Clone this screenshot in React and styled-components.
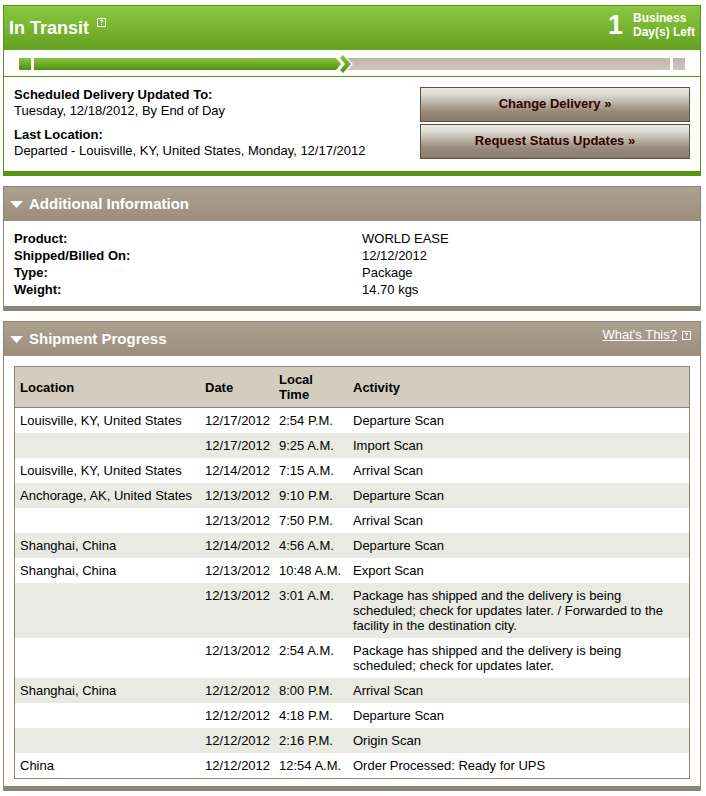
import React from 'react';
import styled, { createGlobalStyle } from 'styled-components';

const details = [
  { label: 'Product:', value: 'WORLD EASE' },
  { label: 'Shipped/Billed On:', value: '12/12/2012' },
  { label: 'Type:', value: 'Package' },
  { label: 'Weight:', value: '14.70 kgs' },
];

const scans = [
  { location: 'Louisville, KY, United States', date: '12/17/2012', time: '2:54 P.M.', activity: 'Departure Scan' },
  { location: '', date: '12/17/2012', time: '9:25 A.M.', activity: 'Import Scan' },
  { location: 'Louisville, KY, United States', date: '12/14/2012', time: '7:15 A.M.', activity: 'Arrival Scan' },
  { location: 'Anchorage, AK, United States', date: '12/13/2012', time: '9:10 P.M.', activity: 'Departure Scan' },
  { location: '', date: '12/13/2012', time: '7:50 P.M.', activity: 'Arrival Scan' },
  { location: 'Shanghai, China', date: '12/14/2012', time: '4:56 A.M.', activity: 'Departure Scan' },
  { location: 'Shanghai, China', date: '12/13/2012', time: '10:48 A.M.', activity: 'Export Scan' },
  {
    location: '',
    date: '12/13/2012',
    time: '3:01 A.M.',
    activity: 'Package has shipped and the delivery is being scheduled; check for updates later. / Forwarded to the facility in the destination city.',
  },
  {
    location: '',
    date: '12/13/2012',
    time: '2:54 A.M.',
    activity: 'Package has shipped and the delivery is being scheduled; check for updates later.',
  },
  { location: 'Shanghai, China', date: '12/12/2012', time: '8:00 P.M.', activity: 'Arrival Scan' },
  { location: '', date: '12/12/2012', time: '4:18 P.M.', activity: 'Departure Scan' },
  { location: '', date: '12/12/2012', time: '2:16 P.M.', activity: 'Origin Scan' },
  { location: 'China', date: '12/12/2012', time: '12:54 A.M.', activity: 'Order Processed: Ready for UPS' },
];

const HelpIcon = () => (
  <svg width="9" height="9" viewBox="0 0 9 9" shapeRendering="crispEdges" aria-hidden="true">
    <path d="M0 0h9v9H0zM1 1v7h7V1z" fill="#fff" fillRule="evenodd" />
    <path d="M3 2h3v2h-1v1h-1v-1h1v-1h-2zM4 6h1v1h-1z" fill="#fff" />
  </svg>
);

const Triangle = () => (
  <svg width="13" height="7" viewBox="0 0 13 7" aria-hidden="true">
    <path d="M0 0h13L6.5 7z" fill="#fff" />
  </svg>
);

const Chevron = () => (
  <ChevronSvg width="18" height="18" viewBox="0 0 18 18" aria-hidden="true">
    <defs>
      <linearGradient id="chevron" x1="0" y1="0" x2="0" y2="1">
        <stop offset="0" stopColor="#8cc63f" />
        <stop offset="1" stopColor="#4f8f16" />
      </linearGradient>
    </defs>
    <path d="M0 3H11L17 9L11 15H0L5 9z" fill="#fff" />
    <path d="M4 3L7 0L15 9L7 18L4 15L9 9z" fill="url(#chevron)" />
  </ChevronSvg>
);

const App = () => (
  <>
    <GlobalStyle />
    <Page>
      <Panel $color="#589218">
        <StatusHeader>
          <StatusTitle>
            In Transit
            <HelpButton type="button" aria-label="Help">
              <HelpIcon />
            </HelpButton>
          </StatusTitle>
          <DaysLeft>
            <DaysCount>1</DaysCount>
            <DaysLabel>
              Business
              <br />
              Day(s) Left
            </DaysLabel>
          </DaysLeft>
        </StatusHeader>

        <Progress>
          <Step $done />
          <Track>
            <TrackFill $percent={49}>
              <Chevron />
            </TrackFill>
          </Track>
          <Step />
        </Progress>

        <Summary>
          <SummaryList>
            <div>
              <Term>Scheduled Delivery Updated To:</Term>
              <Detail>Tuesday, 12/18/2012, By End of Day</Detail>
            </div>
            <div>
              <Term>Last Location:</Term>
              <Detail>Departed - Louisville, KY, United States, Monday, 12/17/2012</Detail>
            </div>
          </SummaryList>
          <Actions>
            <ActionButton type="button">Change Delivery »</ActionButton>
            <ActionButton type="button">Request Status Updates »</ActionButton>
          </Actions>
        </Summary>
      </Panel>

      <Panel $color="#8f8272">
        <SectionHeader>
          <SectionToggle type="button" aria-expanded="true">
            <Triangle />
            Additional Information
          </SectionToggle>
        </SectionHeader>
        <InfoList>
          {details.map((item) => (
            <InfoRow key={item.label}>
              <Term>{item.label}</Term>
              <Detail>{item.value}</Detail>
            </InfoRow>
          ))}
        </InfoList>
      </Panel>

      <Panel $color="#8f8272">
        <SectionHeader>
          <SectionToggle type="button" aria-expanded="true">
            <Triangle />
            Shipment Progress
          </SectionToggle>
          <HelpLink href="#help">
            <span>What's This?</span>
            <HelpIcon />
          </HelpLink>
        </SectionHeader>
        <TableWrap>
          <Table>
            <colgroup>
              <Col $width={185} />
              <Col $width={74} />
              <Col $width={74} />
              <col />
            </colgroup>
            <thead>
              <tr>
                <Th>Location</Th>
                <Th>Date</Th>
                <Th>Local Time</Th>
                <Th>Activity</Th>
              </tr>
            </thead>
            <tbody>
              {scans.map((scan) => (
                <Row key={scan.date + scan.time}>
                  <Td>{scan.location}</Td>
                  <Td>{scan.date}</Td>
                  <Td>{scan.time}</Td>
                  <Td>{scan.activity}</Td>
                </Row>
              ))}
            </tbody>
          </Table>
        </TableWrap>
      </Panel>
    </Page>
  </>
);

const GlobalStyle = createGlobalStyle`
  * {
    box-sizing: border-box;
  }

  body {
    margin: 0;
    background: #fff;
    color: #000;
    font-family: 'Liberation Sans', Arial, Helvetica, sans-serif;
    font-size: 13px;
    line-height: 16px;
  }

  button {
    font-family: inherit;
    cursor: pointer;
  }
`;

const Page = styled.main`
  display: flex;
  flex-direction: column;
  gap: 10px;
  padding: 5px 5px 5px 3px;
`;

const Panel = styled.section`
  border: 1px solid ${props => props.$color};
  border-bottom-width: 5px;
`;

const StatusHeader = styled.header`
  display: flex;
  align-items: center;
  justify-content: space-between;
  height: 44px;
  padding: 0 5px;
  color: #fff;
  background: linear-gradient(#8bc83f, #64a022);
`;

const StatusTitle = styled.h1`
  display: flex;
  align-items: flex-start;
  gap: 8px;
  margin: 0;
  font-size: 18px;
  line-height: 20px;
`;

const HelpButton = styled.button`
  display: flex;
  padding: 0;
  border: 0;
  background: none;
`;

const DaysLeft = styled.div`
  display: flex;
  align-items: center;
  gap: 10px;
  padding-bottom: 6px;
  font-weight: bold;
`;

const DaysCount = styled.span`
  font-size: 27px;
  line-height: 28px;
`;

const DaysLabel = styled.span`
  font-size: 12px;
  line-height: 14px;
`;

const Progress = styled.div`
  display: flex;
  gap: 3px;
  padding: 8px 15px 6px;
  border-bottom: 1px solid #589218;
`;

const Step = styled.div`
  width: 12px;
  height: 12px;
  background: ${props => props.$done
    ? 'linear-gradient(#8cc63f, #4f8f16)'
    : 'linear-gradient(#bfb5a7, #d0c7bb)'};
`;

const Track = styled.div`
  flex: 1;
  height: 12px;
  background: linear-gradient(#bfb5a7, #d0c7bb);
`;

const TrackFill = styled.div`
  position: relative;
  width: ${props => props.$percent}%;
  height: 100%;
  background: linear-gradient(#8cc63f, #4f8f16);
`;

const ChevronSvg = styled.svg`
  position: absolute;
  top: -3px;
  right: -8px;
`;

const Summary = styled.div`
  display: flex;
  justify-content: space-between;
  gap: 20px;
  padding: 10px 10px 12px;
`;

const SummaryList = styled.dl`
  display: flex;
  flex-direction: column;
  gap: 8px;
  margin: 0;
`;

const Term = styled.dt`
  font-weight: bold;
`;

const Detail = styled.dd`
  margin: 0;
`;

const Actions = styled.div`
  display: flex;
  flex: 0 0 270px;
  flex-direction: column;
  gap: 2px;
`;

const ActionButton = styled.button`
  height: 35px;
  padding: 0 0 2px;
  border: 1px solid #5f503f;
  background: linear-gradient(#e9eae4, #dddad2 20%, #988b7c 70%, #8a7c6b);
  color: #330000;
  font-size: 13px;
  font-weight: bold;
`;

const SectionHeader = styled.header`
  display: flex;
  align-items: flex-start;
  justify-content: space-between;
  height: 34px;
  padding: 5px 9px 0 6px;
  background: linear-gradient(#ada190, #9b8e7e);
`;

const SectionToggle = styled.button`
  display: flex;
  align-items: center;
  gap: 6px;
  padding: 0;
  border: 0;
  background: none;
  color: #fff;
  font-size: 15px;
  font-weight: bold;
  line-height: 24px;
`;

const HelpLink = styled.a`
  display: flex;
  align-items: center;
  gap: 5px;
  color: #fff;
  text-decoration: none;

  span {
    text-decoration: underline;
  }
`;

const InfoList = styled.dl`
  margin: 0;
  padding: 9px 10px 8px;
  line-height: 17px;
`;

const InfoRow = styled.div`
  display: grid;
  grid-template-columns: 1fr 1fr;
  column-gap: 20px;
`;

const TableWrap = styled.div`
  padding: 10px 10px 7px;
`;

const Table = styled.table`
  width: 100%;
  table-layout: fixed;
  border: 1px solid #8f8272;
  border-collapse: separate;
  border-spacing: 0;
  line-height: 15px;
`;

const Col = styled.col`
  width: ${props => props.$width}px;
`;

const Th = styled.th`
  padding: 5px;
  border-bottom: 1px solid #8f8272;
  background: #d4ccbf;
  text-align: left;
  vertical-align: middle;
`;

const Td = styled.td`
  padding: 5px;
  vertical-align: top;
`;

const Row = styled.tr`
  &:nth-child(even) {
    background: #e9eae4;
  }
`;

export default App;
